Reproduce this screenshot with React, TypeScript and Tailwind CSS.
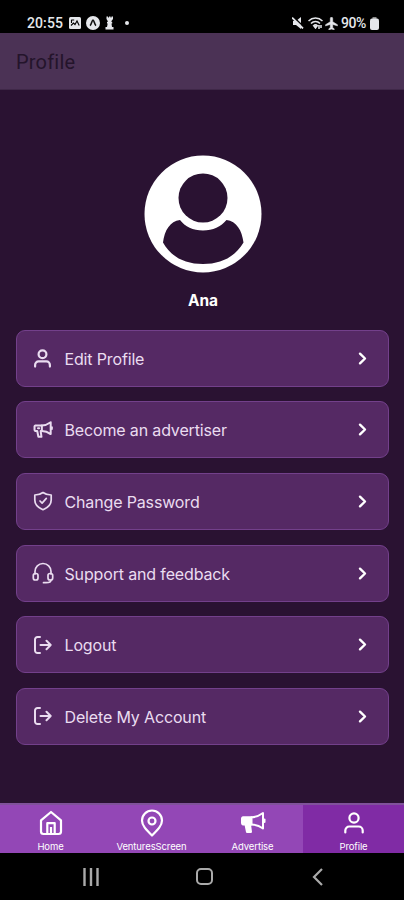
import { useState } from "react";
import type { ReactNode } from "react";

interface MenuItem {
  label: string;
  icon: ReactNode;
}

interface Tab {
  label: string;
  icon: ReactNode;
}

function UserIcon({ className, strokeWidth = 2.2 }: { className?: string; strokeWidth?: number }) {
  return (
    <svg viewBox="0 0 20 22" className={className} fill="none" stroke="currentColor" strokeWidth={strokeWidth} strokeLinecap="round">
      <circle cx="10" cy="6" r="4.6" />
      <path d="M1.300 20.500v-2a4 4 0 0 1 4-4h9.400a4 4 0 0 1 4 4v2" />
    </svg>
  );
}

function MegaphoneIcon({ className, solid = false }: { className?: string; solid?: boolean }) {
  return (
    <svg viewBox="0 0 26 23" className={className} fill="none" stroke="currentColor" strokeWidth={solid ? 2 : 2.6} strokeLinejoin="round" strokeLinecap="round">
      <path d="M11.500 6.300C15.500 6.300 19.500 4.500 23 2v15.500c-3.500-2.600-7.500-4-11.500-4" />
      <path d="M3 6.300h8.500v7.200H10l1 7.500H7l-1.500-7.500H3a1.500 1.500 0 0 1-1-1.500V7.500a1.300 1.300 0 0 1 1-1.200z" fill={solid ? "currentColor" : "none"} />
      {!solid && <path d="M6.500 9.800h1.500" />}
      <path d="M24.500 8.500v2.500" />
    </svg>
  );
}

function ShieldIcon() {
  return (
    <svg viewBox="0 0 20 20" className="size-5" fill="none" stroke="currentColor" strokeWidth="1.700" strokeLinecap="round" strokeLinejoin="round">
      <path d="M10 1.500c2.400 1.800 5 2.500 8.200 2.500v5c0 5-3.400 7.700-8.200 9.700C5.200 16.700 1.800 14 1.800 9V4C5 4 7.600 3.300 10 1.500z" />
      <path d="m7 10 2.100 2.100 4.200-4.700" />
    </svg>
  );
}

function HeadsetIcon() {
  return (
    <svg viewBox="0 0 22 22" className="h-[22px] w-[22px]" fill="none" stroke="currentColor" strokeWidth="1.700" strokeLinecap="round" strokeLinejoin="round">
      <path d="M3 12V9.500C3 5 6.500 1.500 11 1.500S19 5 19 9.500V12" />
      <rect x="1.300" y="11.500" width="4.700" height="6.500" rx="2" />
      <rect x="16" y="11.500" width="4.700" height="6.500" rx="2" />
      <path d="M19 18c0 1.700-1.600 2.700-5 2.700h-2.500" />
    </svg>
  );
}

function LogoutIcon() {
  return (
    <svg viewBox="0 0 18 18" className="h-[18px] w-[18px]" fill="none" stroke="currentColor" strokeWidth="2" strokeLinecap="round" strokeLinejoin="round">
      <path d="M6 1H3.500A2.500 2.500 0 0 0 1 3.500v11A2.500 2.500 0 0 0 3.500 17H6" />
      <path d="M6.500 9h10.200M12.500 4.800 16.700 9l-4.200 4.200" />
    </svg>
  );
}

function HomeIcon() {
  return (
    <svg viewBox="0 0 24 26" className="h-[26px] w-6" fill="none" stroke="currentColor" strokeWidth="2.200" strokeLinejoin="round">
      <path d="M2 10.300 12 2l10 8.300v11.200a2.500 2.500 0 0 1-2.500 2.500h-15A2.500 2.500 0 0 1 2 21.500z" />
      <path d="M8.300 24V13.200h7.400V24M12 17v7" />
    </svg>
  );
}

function PinIcon() {
  return (
    <svg viewBox="0 0 24 28" className="h-7 w-6" fill="none" stroke="currentColor" strokeWidth="2.200" strokeLinejoin="round">
      <path d="M12 26.500C6 20.500 2 16.500 2 11.500a10 10 0 0 1 20 0c0 5-4 9-10 15z" />
      <circle cx="12" cy="12" r="3.500" />
    </svg>
  );
}

const menuItems: MenuItem[] = [
  { label: "Edit Profile", icon: <UserIcon className="h-[19px] w-[17px]" strokeWidth={2.6} /> },
  { label: "Become an advertiser", icon: <MegaphoneIcon className="h-[19px] w-5" /> },
  { label: "Change Password", icon: <ShieldIcon /> },
  { label: "Support and feedback", icon: <HeadsetIcon /> },
  { label: "Logout", icon: <LogoutIcon /> },
  { label: "Delete My Account", icon: <LogoutIcon /> },
];

const tabs: Tab[] = [
  { label: "Home", icon: <HomeIcon /> },
  { label: "VenturesScreen", icon: <PinIcon /> },
  { label: "Advertise", icon: <MegaphoneIcon solid className="h-[23px] w-[26px]" /> },
  { label: "Profile", icon: <UserIcon className="h-[22px] w-5" /> },
];

function StatusBar() {
  return (
    <div className="flex h-[33px] shrink-0 items-end justify-between bg-black pr-[25px] font-[Roboto,sans-serif] pl-[27px] text-[14px] font-medium text-gray-200">
      <div className="flex h-5 items-center">
        <span className="w-[37px] tracking-[0.1px]">20:55</span>
        <svg viewBox="0 0 12 12" className="ml-[5px] h-3 w-3">
          <rect width="12" height="12" rx="1.500" fill="currentColor" />
          <path d="m2 8.500 2.500-2.500L6 7.500 8 4l2.200 4.500M2.200 3h3M2.500 3v3" fill="none" stroke="#000" strokeWidth="1.100" />
        </svg>
        <svg viewBox="0 0 14 14" className="ml-[5px] h-[14px] w-[14px]">
          <circle cx="7" cy="7" r="7" fill="currentColor" />
          <path d="M4 9.700c1.500-1 2-5.700 3-5.700s1.500 4.700 3 5.700" fill="none" stroke="#111" strokeWidth="1.600" />
        </svg>
        <svg viewBox="0 0 9 14" className="ml-[5px] h-[14px] w-[9px]" fill="currentColor">
          <path d="M1.500.5h1.500v1h1v-1h1.500v1h1v-1H8V3L6.500 5v1h.7v1.500h-.7L7 11h1.500v2.500h-8V11H2l.7-3.500H2V6h.7V5L1.500 3z" />
        </svg>
        <span className="ml-[11px] size-1 rounded-full bg-gray-200" />
      </div>
      <div className="flex h-5 items-center">
        <svg viewBox="0 0 12 12" className="h-3 w-3">
          <path d="M1 4h3l5-4v12L4 8H1z" fill="currentColor" />
          <path d="M1.500 0 12 10" stroke="#000" strokeWidth="1.500" />
          <path d="m0 .5 11 11" stroke="currentColor" strokeWidth="1.800" />
        </svg>
        <svg viewBox="0 0 15 12" className="ml-[4px] h-3 w-[15px]" fill="none" stroke="currentColor" strokeWidth="1.500">
          <path d="M.5 4C4.500 0 10.500 0 14.500 4M3 6.500c2.500-2.700 6.500-2.700 9 0M5.500 8.700c1.200-1.200 2.800-1.200 4 0" />
          <path d="m6 9 1.500 2L9 9zM11 8v4M13 8v3" />
        </svg>
        <svg viewBox="1 1 22 22" className="ml-[2px] h-[13px] w-[13px]" fill="currentColor" stroke="currentColor">
          <path d="M22 16v-2l-8-5V3.500a2 2 0 0 0-4 0V9l-8 5v2l8-2.500V19l-2.500 2v1.500L12 21.500l4.500 1V21L14 19v-5.500z" />
        </svg>
        <span className="ml-[3px] w-[29px] text-[14px] tracking-[-0.4px]">90%</span>
        <svg viewBox="0 0 9 13" className="h-[13px] w-[9px]">
          <path d="M2.500 0h4v2h-4z" fill="#8b8b8b" />
          <rect y="1.500" width="9" height="11.500" rx="2" fill="currentColor" />
        </svg>
      </div>
    </div>
  );
}

function Avatar() {
  return (
    <svg viewBox="0 0 118 118" className="ml-px h-[118px] w-[118px]">
      <circle cx="59" cy="59" r="58.500" fill="#fff" />
      <circle cx="59" cy="43" r="24.500" fill="#2a1232" />
      <path
        d="M36 65c-10 1-15.500 10.500-17 22.500C27 102 41 109 59 109s32-7 40.500-21.500C98 75.500 92.500 66 82.500 65 77 71.500 69 75.500 59 75.500S41 71.500 36 65z"
        fill="#2a1232"
      />
    </svg>
  );
}

function MenuRow({ item }: { item: MenuItem }) {
  return (
    <button className="flex h-[57px] w-full items-center rounded-[9px] border border-[#73408b] bg-[#552964] pr-[21px] pl-[14px] text-left text-[#eadcf0]">
      <span className="flex w-6 justify-center">{item.icon}</span>
      <span className="ml-[10px] flex-1 pt-px text-[16px] leading-5 tracking-[-0.15px]">{item.label}</span>
      <svg viewBox="0 0 9 13" className="h-[13px] w-[9px] text-white" fill="none" stroke="currentColor" strokeWidth="2.400" strokeLinecap="round" strokeLinejoin="round">
        <path d="m2 1.700 5 4.800-5 4.800" />
      </svg>
    </button>
  );
}

export default function App() {
  const [activeTab, setActiveTab] = useState("Profile");

  return (
    <div className="flex h-[900px] w-[404px] flex-col overflow-hidden bg-[#2a1232] font-[Inter,sans-serif]">
      <StatusBar />

      {/* Header */}
      <header className="flex h-[57px] shrink-0 items-center border-b border-[#3f2848] bg-[#4b3255] pt-px pl-4">
        <h1 className="font-[Roboto,sans-serif] text-[20px] font-normal tracking-[0.2px] text-[#24142b]">Profile</h1>
      </header>

      {/* Profile */}
      <main className="flex flex-1 flex-col items-center px-4 pt-[65px]">
        <Avatar />
        <p className="mt-[18px] ml-0.5 h-5 text-[15.500px] leading-5 font-bold text-white">Ana</p>
        <div className="mt-[18.500px] flex w-[373px] flex-col gap-[14.700px]">
          {menuItems.map((item) => (
            <MenuRow key={item.label} item={item} />
          ))}
        </div>
      </main>

      {/* Tabs */}
      <nav className="flex h-[50px] shrink-0 border-t-2 border-[#80529b] bg-[#9347b6]">
        {tabs.map((tab) => (
          <button
            key={tab.label}
            onClick={() => setActiveTab(tab.label)}
            className={`flex flex-1 flex-col items-center text-white ${activeTab === tab.label ? "bg-[#802ba5]" : ""}`}
          >
            <span className="flex h-[35px] items-center">{tab.icon}</span>
            <span className="pt-px text-[9.500px] leading-3 tracking-[-0.1px]">{tab.label}</span>
          </button>
        ))}
      </nav>

      {/* System navigation */}
      <div className="flex h-[47px] shrink-0 items-center bg-black pl-[83px] text-[#aaa]">
        <svg viewBox="0 0 16 18" className="h-[18px] w-4" stroke="currentColor" strokeWidth="2.400">
          <path d="M1.500 0v18M8 0v18M14.500 0v18" />
        </svg>
        <span className="ml-[97px] h-[17px] w-[17px] rounded-[5px] border-2 border-[#aaa]" />
        <svg viewBox="0 0 11 18" className="ml-[99px] h-[18px] w-[11px]" fill="none" stroke="currentColor" strokeWidth="2.200">
          <path d="M10 1 2 9l8 8" />
        </svg>
      </div>
    </div>
  );
}
